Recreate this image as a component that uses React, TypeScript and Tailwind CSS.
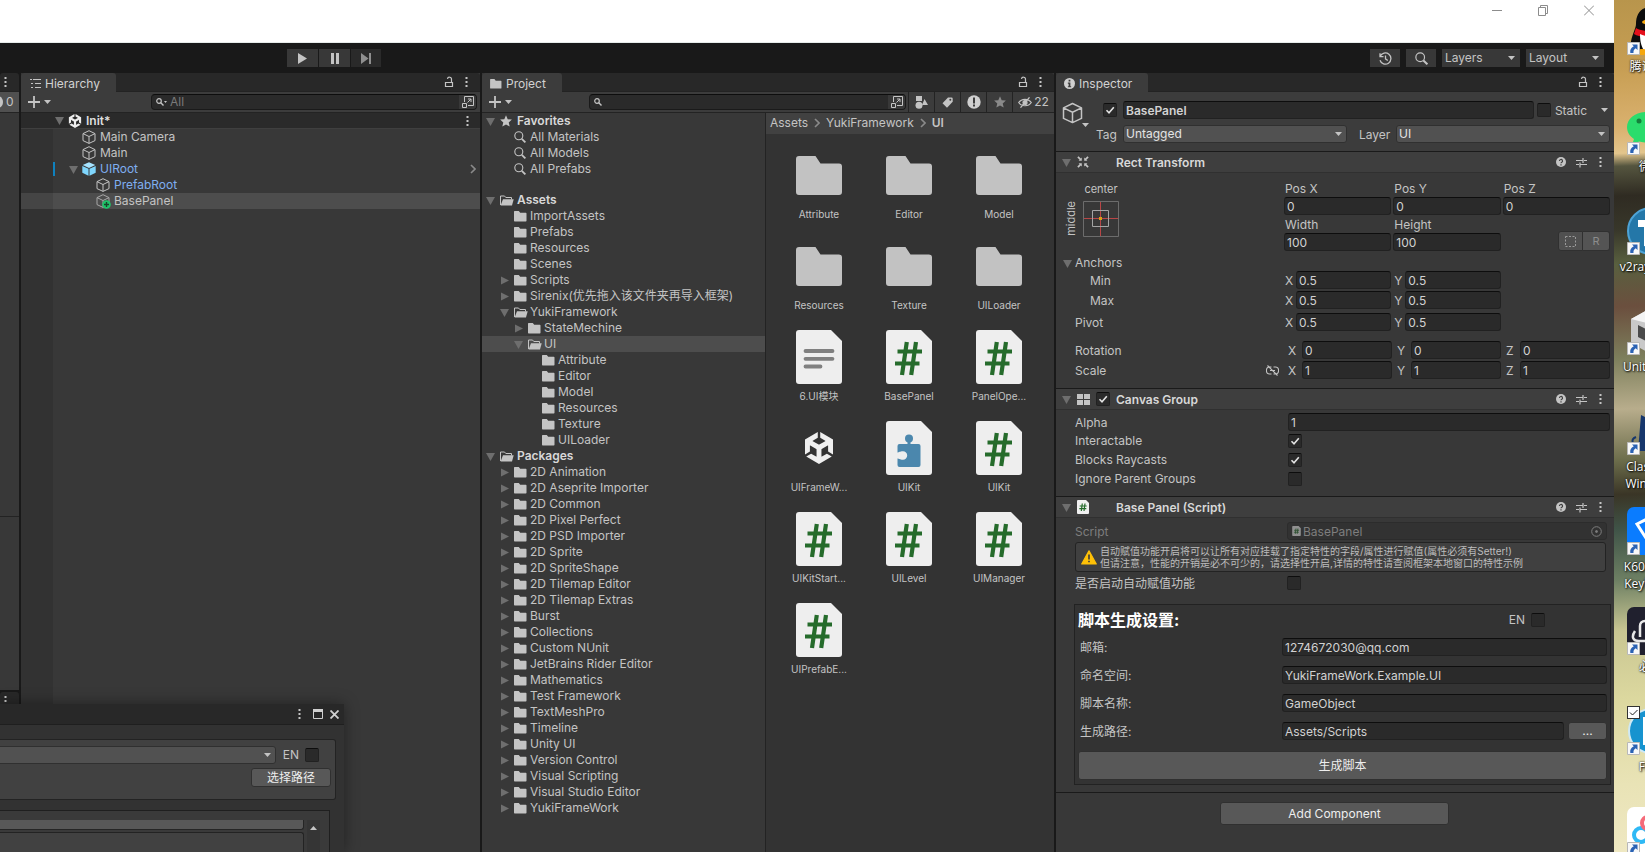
import React, { useId } from "react";
import type { ReactNode } from "react";
import { FaUnity } from "react-icons/fa6";

/* ---------- icons ---------- */

const Dots = () => (
  <svg className="h-3 w-[3px] shrink-0" viewBox="0 0 3 12" fill="#c4c4c4" aria-hidden="true">
    <rect x="0.5" y="1" width="2" height="2" />
    <rect x="0.5" y="5" width="2" height="2" />
    <rect x="0.5" y="9" width="2" height="2" />
  </svg>
);

const Lock = () => (
  <svg className="h-3 w-[10px] shrink-0" viewBox="0 0 10 12" fill="none" stroke="#c4c4c4" aria-hidden="true">
    <path d="M1.5 6.5h7v4h-7zM7.5 6V3.5a2 2 0 0 0-4-.5" strokeWidth="1.2" />
  </svg>
);

const Caret = ({ className = "" }: { className?: string }) => (
  <svg className={`h-1 w-[7px] shrink-0 ${className}`} viewBox="0 0 7 4" fill="#c4c4c4" aria-hidden="true">
    <path d="M0 0h7L3.500 4z" />
  </svg>
);

const Fold = ({ open }: { open: boolean }) => (
  <svg className="size-[9px] shrink-0" viewBox="0 0 9 9" fill="#6e6e6e" aria-hidden="true">
    {open ? <path d="M0 1h9L4.500 9z" /> : <path d="M1 0.500v8l8-4z" />}
  </svg>
);

const Cube = ({ className }: { className: string }) => (
  <svg className={className} viewBox="0 0 14 14" fill="none" stroke="#c4c4c4" strokeLinejoin="round" aria-hidden="true">
    <path d="M7 .7 13 3.600v7L7 13.400 1 10.600v-7zM1 3.600l6 2.900 6-2.900M7 6.500v6.900" />
  </svg>
);

const PrefabCube = () => (
  <svg className="size-[14px] shrink-0" viewBox="0 0 14 14" aria-hidden="true">
    <path d="M7 .3 13.300 3 7 5.900.7 3z" fill="#a6e3ff" />
    <path d="M.3 3.900 6.500 6.700v7L.3 10.800z" fill="#7fd6fd" />
    <path d="M13.700 3.900 7.500 6.700v7l6.200-2.900z" fill="#7fd6fd" />
  </svg>
);

const AddedCube = () => (
  <svg className="h-[15px] w-[15px] shrink-0" viewBox="0 0 15 15" fill="none" aria-hidden="true">
    <path d="M7 .7 13 3.600v7L7 13.400 1 10.600v-7zM1 3.600l6 2.900 6-2.900M7 6.500v6.900" stroke="#a8a8a8" strokeLinejoin="round" />
    <circle cx="10.500" cy="10.500" r="4.300" fill="#1fc46a" />
    <path d="M10.500 8v5M8 10.500h5" stroke="#18452b" strokeWidth="1.400" />
  </svg>
);

const Folder = ({ className = "h-[11px] w-[13px]" }: { className?: string }) => (
  <svg className={`${className} shrink-0`} viewBox="0 0 13 11" fill="#c4c4c4" aria-hidden="true">
    <path d="M.6 0h4.200l1.400 1.800h5.600q.7 0 .7.700v7.300q0 .7-.7.700H.700q-.7 0-.7-.7V.7Q0 0 .6 0z" />
  </svg>
);

const OpenFolder = () => (
  <svg className="h-[11px] w-[14px] shrink-0" viewBox="0 0 14 11" aria-hidden="true">
    <path d="M.5 10V1h4l1.300 1.500H11.500V4.500" fill="none" stroke="#c4c4c4" />
    <path d="M3 4.300h10.700L12 10.500H.6z" fill="#c4c4c4" />
  </svg>
);

const BigFolder = () => (
  <svg className="h-[39px] w-[46px]" viewBox="0 0 46 39" fill="#c2c2c2" aria-hidden="true">
    <path d="M3 0h16.500l5 7.500H43a3 3 0 0 1 3 3V36a3 3 0 0 1-3 3H3a3 3 0 0 1-3-3V3a3 3 0 0 1 3-3z" />
  </svg>
);

const Page = ({ children }: { children: ReactNode }) => (
  <svg className="h-[54px] w-[46px]" viewBox="0 0 46 54" aria-hidden="true">
    <path d="M3 0h32l11 11v40a3 3 0 0 1-3 3H3a3 3 0 0 1-3-3V3a3 3 0 0 1 3-3z" fill="#eeeeee" />
    {children}
  </svg>
);

const ScriptPage = () => (
  <Page>
    <path d="M20.800 12 16 45M30 12l-4.800 33M11.500 21.500h24.500M9 33.500h24.500" stroke="#256b2b" strokeWidth="4.200" fill="none" />
  </Page>
);

const TextPage = () => (
  <Page>
    <path d="M9.500 21h27M9.500 28.800h27M9.500 36.500h15" stroke="#808080" strokeWidth="3.800" strokeLinecap="round" />
  </Page>
);

const PluginPage = () => (
  <Page>
    <circle cx="23" cy="17.500" r="4" fill="#4b87ad" />
    <path d="M21.500 20h3v5h-3zM14 23h18.500a2 2 0 0 1 2 2v19a2 2 0 0 1-2 2H13.500a2 2 0 0 1-2-2v-6.500c1.600 0 2 1.200 5.500 1.200a4.200 4.200 0 0 0 0-8.400c-3.500 0-3.900 1.200-5.500 1.200V25a2 2 0 0 1 2-2z" fill="#4b87ad" />
  </Page>
);

const SmallScript = ({ faded = false }: { faded?: boolean }) => (
  <svg className={faded ? "h-[10px] w-[9px] opacity-50" : "h-[14px] w-3"} viewBox="0 0 12 14" aria-hidden="true">
    <path d="M1 0h8l3 3v10a1 1 0 0 1-1 1H1a1 1 0 0 1-1-1V1a1 1 0 0 1 1-1z" fill="#f0f0f0" />
    <path d="M5.300 3.500 4.300 11M8 3.500 7 11M2.700 6h7M2.300 8.700h7" stroke="#256b2b" strokeWidth="1.200" />
  </svg>
);

const Magnifier = ({ className = "size-3" }: { className?: string }) => (
  <svg className={`${className} shrink-0`} viewBox="0 0 12 12" fill="none" stroke="#c4c4c4" aria-hidden="true">
    <circle cx="4.800" cy="4.800" r="4" strokeWidth="1.100" />
    <path d="m7.800 7.800 3.600 3.600" strokeWidth="1.800" />
  </svg>
);

const SearchGlyph = () => (
  <svg className="size-2 shrink-0" viewBox="0 0 8 8" fill="none" stroke="#c4c4c4" aria-hidden="true">
    <circle cx="3" cy="3" r="2.300" strokeWidth="1.200" />
    <path d="m4.800 4.800 2.700 2.700" strokeWidth="1.400" />
  </svg>
);

const Star = ({ className }: { className: string }) => (
  <svg className={`${className} shrink-0`} viewBox="0 0 12 12" fill="currentColor" aria-hidden="true">
    <path d="m6 .3 1.700 3.900 4.200.4-3.200 2.800 1 4.200L6 9.400l-3.700 2.200 1-4.200L.1 4.600l4.200-.4z" />
  </svg>
);

const Popout = () => (
  <svg className="size-3 shrink-0" viewBox="0 0 12 12" fill="none" stroke="#c4c4c4" aria-hidden="true">
    <path d="M2.500 6V.5h9v9H6M.5 7.500h4v4h-4zM5.500 6.500l3.500-3.500M6 3h3v3" />
  </svg>
);

const Chevron = () => (
  <svg className="h-[10px] w-[6px] shrink-0" viewBox="0 0 6 10" fill="none" stroke="#8a8a8a" strokeWidth="1.600" aria-hidden="true">
    <path d="m1 1 4 4-4 4" />
  </svg>
);

/* ---------- controls ---------- */

function Check({ label, id, checked = false }: { label?: string; id?: string; checked?: boolean }) {
  return (
    <span className="grid size-[14px] shrink-0">
      <input
        type="checkbox"
        id={id}
        aria-label={label}
        defaultChecked={checked}
        className="peer size-[14px] appearance-none rounded-[2px] border border-[#212121] border-t-[#0d0d0d] bg-[#2a2a2a] [grid-area:1/1]"
      />
      <svg className="pointer-events-none hidden size-[14px] peer-checked:block [grid-area:1/1]" viewBox="0 0 14 14" fill="none" stroke="#e4e4e4" strokeWidth="1.600" aria-hidden="true">
        <path d="m3.500 7.300 2.500 2.500 4.800-5.600" />
      </svg>
    </span>
  );
}

const fieldClass =
  "h-[18px] min-w-0 w-full rounded-[3px] border border-[#212121] border-t-[#0d0d0d] bg-[#2a2a2a] px-[2px] text-xs text-[#d2d2d2] outline-none";

const Field = ({ label, id, value }: { label?: string; id?: string; value: string }) => (
  <input type="text" id={id} aria-label={label} defaultValue={value} className={fieldClass} />
);

function Select({ label, id, value, flat = false }: { label?: string; id?: string; value: string; flat?: boolean }) {
  return (
    <span className="grid min-w-0 flex-1 items-center">
      <select
        id={id}
        aria-label={label}
        defaultValue={value}
        className={
          flat
            ? "h-[18px] w-full appearance-none bg-[#383838] px-[3px] text-xs leading-4 text-[#c4c4c4] [grid-area:1/1]"
            : "h-[18px] w-full appearance-none rounded-[3px] border border-[#303030] bg-[#515151] px-[2px] text-xs leading-4 text-[#e4e4e4] [grid-area:1/1]"
        }
      >
        <option>{value}</option>
      </select>
      <Caret className="pointer-events-none mr-[5px] justify-self-end [grid-area:1/1]" />
    </span>
  );
}

const buttonClass = "rounded-[3px] border border-[#303030] bg-[#585858] text-xs leading-4 text-[#eeeeee]";

function PanelTabs({ icon, title, dotsOnly = false }: { icon?: ReactNode; title?: string; dotsOnly?: boolean }) {
  return (
    <div className="flex h-[19px] shrink-0 rounded-t-[3px] border-b border-[#232323] bg-[#282828]">
      {title && (
        <div className="-mb-px flex items-center gap-1 rounded-t-[3px] bg-[#3c3c3c] pt-[2px] pr-4 pl-2 text-[#d2d2d2]">
          {icon}
          <h2>{title}</h2>
        </div>
      )}
      <div className="ml-auto flex items-center gap-[11px] pr-3">
        {!dotsOnly && (
          <button type="button" aria-label="Lock panel">
            <Lock />
          </button>
        )}
        <button type="button" aria-label="Panel menu">
          <Dots />
        </button>
      </div>
    </div>
  );
}

function AddButton() {
  return (
    <button type="button" aria-label="Create" className="flex items-center gap-1 pl-[7px]">
      <svg className="size-3" viewBox="0 0 12 12" stroke="#c4c4c4" strokeWidth="1.800" aria-hidden="true">
        <path d="M6 0v12M0 6h12" />
      </svg>
      <Caret />
    </button>
  );
}

function SearchBox({ placeholder, menu = false }: { placeholder?: string; menu?: boolean }) {
  return (
    <div className="flex h-4 min-w-0 flex-1 items-center overflow-hidden rounded-[4px] border border-[#1a1a1a] border-t-[#0d0d0d] bg-[#2a2a2a] pl-1">
      <SearchGlyph />
      {menu && (
        <svg className="h-[2px] w-[3px]" viewBox="0 0 3 2" fill="#c4c4c4" aria-hidden="true">
          <path d="M0 0h3L1.500 2z" />
        </svg>
      )}
      <input
        type="text"
        aria-label="Search"
        placeholder={placeholder}
        className="min-w-0 flex-1 bg-transparent pl-[3px] text-xs leading-[14px] text-[#d2d2d2] outline-none placeholder:text-[#7a7a7a]"
      />
      <button type="button" aria-label="Open in search window" className="flex h-full w-[17px] items-center justify-center bg-[#383838]">
        <Popout />
      </button>
    </div>
  );
}

/* ---------- top bars ---------- */

function TitleBar() {
  return (
    <header className="flex h-[43px] shrink-0 items-start justify-end border-b border-[#e6ebea] bg-white pr-[2px]">
      {[
        { name: "Minimize", d: "M0 5.500h10" },
        { name: "Restore", d: "M.5 2.500h7v8h-7zM2.500 2.500V.5h7v8h-2" },
        { name: "Close", d: "m0 .5 10 10m0-10-10 10" },
      ].map((b) => (
        <button key={b.name} type="button" aria-label={b.name} className="flex h-5 w-[46px] items-center justify-center">
          <svg className="h-[11px] w-[10px]" viewBox="0 0 10 11" fill="none" stroke="#8c8c8c" aria-hidden="true">
            <path d={b.d} />
          </svg>
        </button>
      ))}
    </header>
  );
}

function Toolbar() {
  return (
    <div className="flex h-[30px] shrink-0 items-center bg-[#191919] pr-[10px] pl-[287px]">
      <div className="flex gap-px">
        <button type="button" aria-label="Play" className="flex h-[18px] w-[31px] items-center justify-center bg-[#383838]">
          <svg className="h-[11px] w-[9px]" viewBox="0 0 9 11" fill="#c4c4c4" aria-hidden="true">
            <path d="M0 0v11l9-5.500z" />
          </svg>
        </button>
        <button type="button" aria-label="Pause" className="flex h-[18px] w-[31px] items-center justify-center bg-[#383838]">
          <svg className="h-[11px] w-2" viewBox="0 0 8 11" fill="#c4c4c4" aria-hidden="true">
            <path d="M0 0h3v11H0zM5 0h3v11H5z" />
          </svg>
        </button>
        <button type="button" aria-label="Step" className="flex h-[18px] w-[30px] items-center justify-center bg-[#2a2a2a]">
          <svg className="h-[11px] w-[10px]" viewBox="0 0 10 11" fill="#8f8f8f" aria-hidden="true">
            <path d="M0 0v11l7.500-5.500zM8 0h2v11H8z" />
          </svg>
        </button>
      </div>
      <div className="ml-auto flex gap-[6px]">
        <button type="button" aria-label="Undo history" className="flex h-[18px] w-[30px] items-center justify-center bg-[#383838]">
          <svg className="size-[13px]" viewBox="0 0 13 13" fill="none" stroke="#c4c4c4" strokeWidth="1.300" aria-hidden="true">
            <path d="M1.200 4.300a5.600 5.600 0 1 1-.2 4M1 1.200v3.500h3.500M6.500 3.500v3.300l2.300 1.700" />
          </svg>
        </button>
        <button type="button" aria-label="Search" className="flex h-[18px] w-[30px] items-center justify-center bg-[#383838]">
          <Magnifier className="size-[13px]" />
        </button>
        <div className="flex w-[78px]">
          <Select flat label="Layers menu" value="Layers" />
        </div>
        <div className="flex w-[78px]">
          <Select flat label="Layout menu" value="Layout" />
        </div>
      </div>
    </div>
  );
}

/* ---------- hierarchy ---------- */

function SceneSliver() {
  return (
    <aside className="flex w-[19px] shrink-0 flex-col gap-[2px] overflow-hidden">
      <div className="flex min-h-0 flex-1 flex-col">
        <PanelTabs dotsOnly />
        <div className="flex h-[21px] shrink-0 items-center gap-[3px] border-b border-[#232323] bg-[#505050]">
          <svg className="h-3 w-[3px]" viewBox="0 0 3 12" fill="#c4c4c4" aria-hidden="true">
            <path d="M0 .5q3 2 3 5.500t-3 5.500z" />
          </svg>
          <span>0</span>
        </div>
        <div className="flex-1 border-b border-[#232323] bg-[#383838]" />
        <div className="h-[173px] bg-[#383838]" />
      </div>
      <div className="h-[160px] shrink-0">
        <PanelTabs dotsOnly />
        <div className="h-full bg-[#383838]" />
      </div>
    </aside>
  );
}

function HierarchyRow({ name, className = "", indent, icon, arrow = false, children }: { name: string; className?: string; indent: string; icon: ReactNode; arrow?: boolean; children?: ReactNode }) {
  return (
    <li className={`flex h-4 items-center border-l-[32px] border-black/10 ${className}`}>
      <div className={`flex h-[14px] flex-1 items-center gap-1 pr-1 ${indent}`}>
        <span className="w-[9px]">{arrow && <Fold open />}</span>
        <span className="w-[14px]">{icon}</span>
        <span className="flex-1">{name}</span>
        {children}
      </div>
    </li>
  );
}

function Hierarchy() {
  return (
    <section className="flex w-[459px] shrink-0 flex-col bg-[#383838]">
      <PanelTabs
        title="Hierarchy"
        icon={
          <svg className="h-[9px] w-3" viewBox="0 0 12 9" stroke="#c4c4c4" aria-hidden="true">
            <path d="M1 .5h2M4 .5h8M2 4.500h2M6 4.500h6M2 8.500h2M6 8.500h6" />
          </svg>
        }
      />
      <div className="flex h-[21px] shrink-0 items-center border-b border-[#232323] bg-[#3c3c3c] pr-[3px]">
        <div className="w-[130px]">
          <AddButton />
        </div>
        <SearchBox placeholder="All" menu />
      </div>
      <div className="flex h-4 shrink-0 items-center gap-1 border-b border-[#3f3f3f] bg-[#2a2a2a] pr-[11px] pl-[34px] font-semibold text-[#dedede]">
        <Fold open />
        <FaUnity className="size-[14px] text-[#eeeeee]" aria-hidden="true" />
        <span className="flex-1">Init*</span>
        <button type="button" aria-label="Scene menu">
          <Dots />
        </button>
      </div>
      <ul>
        <HierarchyRow name="Main Camera" indent="pl-4" icon={<Cube className="size-[14px]" />} />
        <HierarchyRow name="Main" indent="pl-4" icon={<Cube className="size-[14px]" />} />
        <HierarchyRow name="UIRoot" className="text-[#7faef0]" indent="border-l-2 border-[#0f81be] pl-[14px]" icon={<PrefabCube />} arrow>
          <Chevron />
        </HierarchyRow>
        <HierarchyRow name="PrefabRoot" className="text-[#7faef0]" indent="pl-[30px]" icon={<Cube className="size-[14px]" />} />
        <HierarchyRow name="BasePanel" className="bg-[#4d4d4d]" indent="pl-[30px]" icon={<AddedCube />} />
      </ul>
      <div className="w-8 flex-1 bg-black/10" />
    </section>
  );
}

/* ---------- project ---------- */

type Node = { name: string; level: 0 | 1 | 2 | 3; fold?: "open" | "closed"; kind?: "star" | "search"; selected?: boolean };

const levelPad = ["pl-1", "pl-[18px]", "pl-8", "pl-[46px]"];

const favorites: Node[] = [
  { name: "Favorites", level: 0, fold: "open", kind: "star" },
  { name: "All Materials", level: 1, kind: "search" },
  { name: "All Models", level: 1, kind: "search" },
  { name: "All Prefabs", level: 1, kind: "search" },
];

const closed = (name: string): Node => ({ name, level: 1, fold: "closed" });

const assets: Node[] = [
  { name: "Assets", level: 0, fold: "open" },
  { name: "ImportAssets", level: 1 },
  { name: "Prefabs", level: 1 },
  { name: "Resources", level: 1 },
  { name: "Scenes", level: 1 },
  closed("Scripts"),
  closed("Sirenix(优先拖入该文件夹再导入框架)"),
  { name: "YukiFramework", level: 1, fold: "open" },
  { name: "StateMechine", level: 2, fold: "closed" },
  { name: "UI", level: 2, fold: "open", selected: true },
  { name: "Attribute", level: 3 },
  { name: "Editor", level: 3 },
  { name: "Model", level: 3 },
  { name: "Resources", level: 3 },
  { name: "Texture", level: 3 },
  { name: "UILoader", level: 3 },
  { name: "Packages", level: 0, fold: "open" },
  closed("2D Animation"),
  closed("2D Aseprite Importer"),
  closed("2D Common"),
  closed("2D Pixel Perfect"),
  closed("2D PSD Importer"),
  closed("2D Sprite"),
  closed("2D SpriteShape"),
  closed("2D Tilemap Editor"),
  closed("2D Tilemap Extras"),
  closed("Burst"),
  closed("Collections"),
  closed("Custom NUnit"),
  closed("JetBrains Rider Editor"),
  closed("Mathematics"),
  closed("Test Framework"),
  closed("TextMeshPro"),
  closed("Timeline"),
  closed("Unity UI"),
  closed("Version Control"),
  closed("Visual Scripting"),
  closed("Visual Studio Editor"),
  closed("YukiFrameWork"),
];

function TreeRow({ node }: { node: Node }) {
  let icon = <Folder />;
  if (node.kind === "star") icon = <Star className="size-3 text-[#c4c4c4]" />;
  else if (node.kind === "search") icon = <Magnifier />;
  else if (node.fold === "open") icon = <OpenFolder />;
  return (
    <li
      className={`flex h-4 items-center whitespace-nowrap ${levelPad[node.level]} ${node.selected ? "bg-[#4d4d4d]" : ""} ${
        node.level === 0 ? "font-semibold text-[#d8d8d8]" : ""
      }`}
    >
      <span className="w-[14px]">{node.fold && <Fold open={node.fold === "open"} />}</span>
      <span className={node.level === 0 ? "w-[17px]" : "w-4"}>{icon}</span>
      <span>{node.name}</span>
    </li>
  );
}

const gridItems: { name: string; icon: ReactNode }[] = [
  { name: "Attribute", icon: <BigFolder /> },
  { name: "Editor", icon: <BigFolder /> },
  { name: "Model", icon: <BigFolder /> },
  { name: "Resources", icon: <BigFolder /> },
  { name: "Texture", icon: <BigFolder /> },
  { name: "UILoader", icon: <BigFolder /> },
  { name: "6.UI模块", icon: <TextPage /> },
  { name: "BasePanel", icon: <ScriptPage /> },
  { name: "PanelOpe...", icon: <ScriptPage /> },
  { name: "UIFrameW...", icon: <FaUnity className="size-8 text-[#efefef]" aria-hidden="true" /> },
  { name: "UIKit", icon: <PluginPage /> },
  { name: "UIKit", icon: <ScriptPage /> },
  { name: "UIKitStart...", icon: <ScriptPage /> },
  { name: "UILevel", icon: <ScriptPage /> },
  { name: "UIManager", icon: <ScriptPage /> },
  { name: "UIPrefabE...", icon: <ScriptPage /> },
];

const filterButton = "flex h-5 w-[26px] items-center justify-center border-l border-[#232323]";

function Project() {
  return (
    <section className="flex min-w-0 flex-1 flex-col bg-[#383838]">
      <PanelTabs title="Project" icon={<Folder className="h-[10px] w-3" />} />
      <div className="flex h-[21px] shrink-0 items-center border-b border-[#232323] bg-[#3c3c3c]">
        <div className="w-[107px]">
          <AddButton />
        </div>
        <SearchBox />
        <div className="ml-[2px] flex">
          <button type="button" aria-label="Filter by type" className={filterButton}>
            <svg className="h-[13px] w-[13px]" viewBox="0 0 13 13" fill="#c4c4c4" aria-hidden="true">
              <path d="M1 0h6v5H1zM9.500 3l3.500 6H7z" />
              <circle cx="4" cy="9.300" r="3.500" />
            </svg>
          </button>
          <button type="button" aria-label="Filter by label" className={filterButton}>
            <svg className="h-[11px] w-[11px]" viewBox="0 0 11 11" aria-hidden="true">
              <path d="M6 .5h3.500a1.200 1.200 0 0 1 1.200 1.200v3L5 10.700.5 6.200z" fill="#c4c4c4" />
              <circle cx="8.300" cy="2.800" r="1" fill="#3c3c3c" />
            </svg>
          </button>
          <button type="button" aria-label="Import activity" className={filterButton}>
            <svg className="size-[14px]" viewBox="0 0 14 14" aria-hidden="true">
              <circle cx="7" cy="7" r="6.700" fill="#d0d0d0" />
              <path d="M6 2.500h2v6H6zM6 9.500h2v2H6z" fill="#3c3c3c" />
            </svg>
          </button>
          <button type="button" aria-label="Favorites" className={filterButton}>
            <Star className="size-3 text-[#8a8a8a]" />
          </button>
          <button type="button" aria-label="Hidden packages" className="flex h-5 w-[42px] items-center justify-center gap-[2px] border-l border-[#232323]">
            <svg className="h-[11px] w-[14px]" viewBox="0 0 14 11" fill="none" stroke="#c4c4c4" strokeWidth="1.200" aria-hidden="true">
              <path d="M.7 5.500C3.500 1.200 10.500 1.200 13.300 5.500 10.500 9.800 3.500 9.800.7 5.500zM11.500.3l-9 10.400" />
              <circle cx="7" cy="5.500" r="2" fill="#c4c4c4" />
            </svg>
            <span>22</span>
          </button>
        </div>
      </div>
      <div className="flex min-h-0 flex-1">
        <nav aria-label="Folders" className="w-[284px] shrink-0 overflow-hidden border-r border-[#232323]">
          <ul className="mb-[15px]">
            {favorites.map((n) => (
              <TreeRow key={n.name} node={n} />
            ))}
          </ul>
          <ul>
            {assets.map((n, i) => (
              <TreeRow key={i} node={n} />
            ))}
          </ul>
        </nav>
        <div className="min-w-0 flex-1 bg-[#333333]">
          <nav aria-label="Breadcrumb" className="flex h-[21px] items-center gap-[6px] bg-[#414141] pb-[2px] pl-1">
            <a href="#assets">Assets</a>
            <Chevron />
            <a href="#yukiframework">YukiFramework</a>
            <Chevron />
            <a href="#ui" className="font-semibold">
              UI
            </a>
          </nav>
          <ul className="grid grid-cols-3 pt-2 pr-[10px] pl-2">
            {gridItems.map((item, i) => (
              <li key={i} className="flex h-[91px] flex-col items-center text-[10px] leading-3">
                <span className="flex h-[66px] items-center">{item.icon}</span>
                <span className="whitespace-nowrap">{item.name}</span>
              </li>
            ))}
          </ul>
        </div>
      </div>
    </section>
  );
}

/* ---------- inspector ---------- */

function ComponentHeader({ title, icon, enabled }: { title: string; icon: ReactNode; enabled?: boolean }) {
  return (
    <div className="flex h-[22px] items-center border-t border-b border-t-[#1a1a1a] border-b-[#303030] bg-[#3e3e3e] pr-3 pl-[6px]">
      <Fold open />
      <span className="ml-[5px] flex w-[14px] justify-center">{icon}</span>
      <span className="ml-[6px] flex w-5">{enabled && <Check label={`${title} enabled`} checked />}</span>
      <h3 className="flex-1 pt-[2px] font-semibold text-[#d8d8d8]">{title}</h3>
      <div className="flex items-center gap-[10px]">
        <button type="button" aria-label="Help">
          <svg className="size-[10px]" viewBox="0 0 10 10" aria-hidden="true">
            <circle cx="5" cy="5" r="5" fill="#c4c4c4" />
            <path d="M3.500 4a1.500 1.500 0 1 1 2.300 1.200q-.8.400-.8 1M5 7.200v1.300" stroke="#3e3e3e" strokeWidth="1.200" fill="none" />
          </svg>
        </button>
        <button type="button" aria-label="Presets" className="mr-[2px]">
          <svg className="size-[11px]" viewBox="0 0 11 11" stroke="#c4c4c4" strokeWidth="1.200" aria-hidden="true">
            <path d="M0 3.500h7M7 1v5M8 3.500h3M0 7.500h3M4 5.500v5M4 7.500h7" />
          </svg>
        </button>
        <button type="button" aria-label={`${title} menu`}>
          <Dots />
        </button>
      </div>
    </div>
  );
}

function LabeledCell({ label, value }: { label: string; value: string }) {
  const id = useId();
  return (
    <div className="flex min-w-0 flex-col">
      <label htmlFor={id} className="h-4 pl-px">
        {label}
      </label>
      <Field id={id} value={value} />
    </div>
  );
}

function AxisCell({ axis, value, name, wide = false }: { axis: string; value: string; name: string; wide?: boolean }) {
  const id = useId();
  return (
    <div className="flex min-w-0 items-center">
      <label htmlFor={id} aria-label={`${name} ${axis}`} className={wide ? "w-[14px] shrink-0 pt-px" : "w-3 shrink-0 pt-px pl-px"}>
        {axis}
      </label>
      <Field id={id} value={value} />
    </div>
  );
}

function AnchorRow({ name, indent = false }: { name: string; indent?: boolean }) {
  return (
    <div className="flex h-[18px] items-center">
      <span className={indent ? "w-[209px] shrink-0 pt-px pl-[15px]" : "w-[209px] shrink-0 pt-px"}>{name}</span>
      <div className="grid flex-1 grid-cols-3 gap-[2px]">
        <AxisCell name={name} axis="X" value="0.5" />
        <AxisCell name={name} axis="Y" value="0.5" />
      </div>
    </div>
  );
}

function VectorRow({ name, value, linked = false }: { name: string; value: string; linked?: boolean }) {
  return (
    <div className="flex h-[18px] items-center">
      <span className="flex w-[213px] shrink-0 items-center justify-between pt-px pr-[9px]">
        {name}
        {linked && (
          <button type="button" aria-label="Constrain proportions">
            <svg className="h-[11px] w-[13px]" viewBox="0 0 13 11" fill="none" stroke="#c4c4c4" strokeWidth="1.100" aria-hidden="true">
              <path d="M5.500 2h-2a2.900 3.300 0 0 0 0 7h2M7.500 2h2a2.900 3.300 0 0 1 0 7h-2M4 5.500h5M1.500.5l10 10" />
            </svg>
          </button>
        )}
      </span>
      <div className="grid flex-1 grid-cols-3 gap-[5px]">
        <AxisCell wide name={name} axis="X" value={value} />
        <AxisCell wide name={name} axis="Y" value={value} />
        <AxisCell wide name={name} axis="Z" value={value} />
      </div>
    </div>
  );
}

function RectTransform() {
  return (
    <div className="pt-2 pr-1 pb-[9px] pl-[19px]">
      <div className="flex">
        <div className="flex w-[209px] shrink-0">
          <span className="-ml-3 flex h-[62px] w-5 items-end pb-[7px] text-[11px] leading-4 whitespace-nowrap">
            <span className="rotate-180 [writing-mode:vertical-rl]">middle</span>
          </span>
          <div className="flex flex-col items-center text-[11px]">
            <span className="h-5 leading-4">center</span>
            <button type="button" aria-label="Anchor presets">
              <svg className="size-9" viewBox="0 0 36 36" fill="none" aria-hidden="true">
                <path d="M.5.500h35v35H.500z" stroke="#6c6c6c" />
                <path d="M17.500 1v34M1 17.500h34" stroke="#b84646" />
                <path d="M9.500 9.500h16v16h-16z" stroke="#a4a4a4" />
                <path d="M16 16h3v3h-3z" fill="#d8a018" />
              </svg>
            </button>
          </div>
        </div>
        <div className="grid flex-1 grid-cols-3 gap-[2px]">
          <LabeledCell label="Pos X" value="0" />
          <LabeledCell label="Pos Y" value="0" />
          <LabeledCell label="Pos Z" value="0" />
          <LabeledCell label="Width" value="100" />
          <LabeledCell label="Height" value="100" />
          <div className="flex items-end justify-end">
            <button type="button" aria-label="Blueprint mode" className="flex h-5 w-[25px] items-center justify-center rounded-l-[3px] border border-[#303030] bg-[#505050]">
              <svg className="size-[11px]" viewBox="0 0 11 11" fill="none" stroke="#9a9a9a" strokeDasharray="2 1.500" aria-hidden="true">
                <path d="M.5.500h10v10H.500z" />
              </svg>
            </button>
            <button type="button" aria-label="Raw edit mode" className="h-5 w-[27px] rounded-r-[3px] border border-l-0 border-[#303030] bg-[#545454] text-[11px] leading-4 text-[#8c8c8c]">
              R
            </button>
          </div>
        </div>
      </div>
      <button type="button" className="mt-1 -ml-3 flex h-4 items-center gap-[3px]">
        <Fold open />
        <span>Anchors</span>
      </button>
      <div className="flex flex-col gap-[2px]">
        <AnchorRow indent name="Min" />
        <AnchorRow indent name="Max" />
      </div>
      <div className="pt-1 pb-[10px]">
        <AnchorRow name="Pivot" />
      </div>
      <div className="flex flex-col gap-[2px]">
        <VectorRow name="Rotation" value="0" />
        <VectorRow name="Scale" value="1" linked />
      </div>
    </div>
  );
}

function ToggleRow({ label, checked = false }: { label: string; checked?: boolean }) {
  const id = useId();
  return (
    <div className="flex h-[19px] items-center">
      <label htmlFor={id} className="w-[213px]">
        {label}
      </label>
      <Check id={id} checked={checked} />
    </div>
  );
}

function CanvasGroup() {
  return (
    <div className="pt-[3px] pr-1 pb-2 pl-[19px]">
      <div className="flex items-center">
        <label htmlFor="alpha" className="w-[213px] shrink-0 pt-px">
          Alpha
        </label>
        <Field id="alpha" value="1" />
      </div>
      <ToggleRow label="Interactable" checked />
      <ToggleRow label="Blocks Raycasts" checked />
      <ToggleRow label="Ignore Parent Groups" />
    </div>
  );
}

function ScriptRow({ label, value, children }: { label: string; value: string; children?: ReactNode }) {
  const id = useId();
  return (
    <div className="flex h-[18px] items-center">
      <label htmlFor={id} className="w-[204px] shrink-0 pt-px pl-[2px]">
        {label}
      </label>
      <Field id={id} value={value} />
      {children}
    </div>
  );
}

function BasePanelScript() {
  return (
    <div className="pt-1 pr-[3px] pb-[7px] pl-[18px]">
      <div className="flex h-[18px] items-center pr-1 pl-px text-[#7e7e7e]">
        <span className="w-[212px] shrink-0 pt-[2px]">Script</span>
        <div className="flex h-[18px] flex-1 items-center gap-[2px] rounded-[3px] border border-[#2c2c2c] bg-[#323232] pr-1 pl-1">
          <SmallScript faded />
          <span className="flex-1 pt-px">BasePanel</span>
          <button type="button" aria-label="Select script">
            <svg className="size-[11px]" viewBox="0 0 11 11" fill="none" stroke="#7e7e7e" aria-hidden="true">
              <circle cx="5.500" cy="5.500" r="4.800" />
              <circle cx="5.500" cy="5.500" r="1" fill="#7e7e7e" />
            </svg>
          </button>
        </div>
      </div>
      <div className="mt-[2px] mr-[5px] ml-px flex h-[30px] items-center gap-[3px] rounded-[3px] border border-[#232323] bg-[#404040] pl-[5px] text-[10px] leading-3 text-[#bdbdbd]">
        <svg className="h-[15px] w-4 shrink-0" viewBox="0 0 16 15" aria-hidden="true">
          <path d="M8 .8 15.300 14H.7z" fill="#ffc107" stroke="#ffc107" strokeWidth="1.200" strokeLinejoin="round" />
          <path d="M7.200 4.500h1.600v5H7.200zM7.200 10.700h1.600v1.600H7.200z" fill="#3a3a3a" />
        </svg>
        <p className="whitespace-nowrap">
          自动赋值功能开启将可以让所有对应挂载了指定特性的字段/属性进行赋值(属性必须有Setter!)
          <br />
          但请注意，性能的开销是必不可少的，请选择性开启,详情的特性请查阅框架本地窗口的特性示例
        </p>
      </div>
      <div className="mt-[2px] flex h-[18px] items-center pl-px">
        <label htmlFor="auto-assign" className="w-[212px] pt-[2px]">
          是否启动自动赋值功能
        </label>
        <Check id="auto-assign" />
      </div>
      <div className="mt-3 flex flex-col border border-[#222222] bg-[#333333] px-[3px] pb-1">
        <div className="mb-[3px] flex h-[30px] items-center pr-[62px]">
          <h4 className="flex-1 text-base font-bold text-white">脚本生成设置:</h4>
          <label htmlFor="script-en" className="mr-[6px]">
            EN
          </label>
          <Check id="script-en" />
        </div>
        <div className="flex flex-col gap-[10px]">
          <ScriptRow label="邮箱:" value="1274672030@qq.com" />
          <ScriptRow label="命名空间:" value="YukiFrameWork.Example.UI" />
          <ScriptRow label="脚本名称:" value="GameObject" />
          <ScriptRow label="生成路径:" value="Assets/Scripts">
            <button type="button" aria-label="Browse path" className={`${buttonClass} ml-1 h-[18px] w-[39px] shrink-0`}>
              ...
            </button>
          </ScriptRow>
        </div>
        <button type="button" className={`${buttonClass} mt-[11px] h-[29px]`}>
          生成脚本
        </button>
      </div>
    </div>
  );
}

function Inspector() {
  return (
    <section className="flex w-[558px] shrink-0 flex-col bg-[#383838]">
      <PanelTabs
        title="Inspector"
        icon={
          <svg className="size-[11px]" viewBox="0 0 10 10" aria-hidden="true">
            <circle cx="5" cy="5" r="5" fill="#d0d0d0" />
            <path d="M4.200 1.700h1.600v1.500H4.200zM3.500 4.200h2.300V7.500h.7v1h-3v-1h.7V5.200h-.7z" fill="#3c3c3c" />
          </svg>
        }
      />
      <div className="flex h-[59px] shrink-0 bg-[#3c3c3c] pr-1 pl-[6px]">
        <button type="button" aria-label="Object icon" className="flex w-[27px] items-start pt-[10px]">
          <Cube className="size-[22px]" />
          <Caret className="mt-[21px] -ml-px" />
        </button>
        <div className="flex flex-1 flex-col gap-[6px] pt-[9px]">
          <div className="flex h-[18px] items-center pl-[14px]">
            <Check label="Active" checked />
            <div className="ml-[6px] flex flex-1">
              <input type="text" aria-label="Object name" defaultValue="BasePanel" className={`${fieldClass} font-semibold`} />
            </div>
            <span className="ml-[3px] flex items-center gap-1">
              <Check id="static" />
              <label htmlFor="static" className="pt-[2px]">
                Static
              </label>
            </span>
            <button type="button" aria-label="Static options" className="mr-[2px] ml-[14px]">
              <Caret />
            </button>
          </div>
          <div className="flex h-[18px] items-center">
            <label htmlFor="tag" className="w-[34px] pt-px pl-[7px]">
              Tag
            </label>
            <div className="flex w-[224px]">
              <Select id="tag" value="Untagged" />
            </div>
            <label htmlFor="layer" className="w-[49px] pt-px pl-3">
              Layer
            </label>
            <Select id="layer" value="UI" />
          </div>
        </div>
      </div>
      <ComponentHeader
        title="Rect Transform"
        icon={
          <svg className="size-3" viewBox="0 0 12 12" fill="#c4c4c4" aria-hidden="true">
            <path d="M4.800 4.800H1.600l1-1L.3 1.500 1.500.3l2.300 2.300 1-1zM7.200 4.800V1.600l1 1L10.500.3l1.200 1.200-2.300 2.300 1 1zM4.800 7.200v3.200l-1-1-2.300 2.300L.3 10.500l2.300-2.300-1-1zM7.200 7.200h3.200l-1 1 2.300 2.300-1.200 1.200-2.300-2.300-1 1z" />
          </svg>
        }
      />
      <RectTransform />
      <ComponentHeader
        title="Canvas Group"
        enabled
        icon={
          <svg className="h-[11px] w-[13px]" viewBox="0 0 13 11" fill="#c4c4c4" aria-hidden="true">
            <path d="M0 0h6v5H0zM7 0h6v5H7zM0 6h6v5H0zM7 6h6v5H7z" />
          </svg>
        }
      />
      <CanvasGroup />
      <ComponentHeader title="Base Panel (Script)" icon={<SmallScript />} />
      <BasePanelScript />
      <div className="flex justify-center border-t border-[#1a1a1a] pt-[9px] pr-px">
        <button type="button" className={`${buttonClass} h-[23px] w-[229px]`}>
          Add Component
        </button>
      </div>
    </section>
  );
}

/* ---------- floating window ---------- */

function FloatingWindow() {
  return (
    <section className="absolute bottom-0 left-0 flex h-[148px] w-[344px] flex-col overflow-hidden bg-[#323232] shadow-[0_0_14px_rgba(0,0,0,0.4)]">
      <div className="flex h-[21px] shrink-0 items-center justify-end gap-[10px] border-b border-[#1f1f1f] bg-[#282828] pr-[5px]">
        <button type="button" aria-label="Window menu">
          <Dots />
        </button>
        <button type="button" aria-label="Maximize" className="ml-[2px]">
          <svg className="size-[10px]" viewBox="0 0 10 10" fill="none" stroke="#d0d0d0" aria-hidden="true">
            <path d="M.5 1h9v8.500h-9z" />
            <path d="M0 1.500h10" strokeWidth="3" />
          </svg>
        </button>
        <button type="button" aria-label="Close window" className="-ml-[3px]">
          <svg className="size-[9px]" viewBox="0 0 9 9" stroke="#d0d0d0" strokeWidth="1.800" aria-hidden="true">
            <path d="m.5.500 8 8m0-8-8 8" />
          </svg>
        </button>
      </div>
      <div className="mt-[14px] mr-2 flex h-[61px] shrink-0 flex-col gap-1 rounded-r-[3px] border border-l-0 border-[#232323] bg-[#414141] pt-[6px] pr-1">
        <div className="-ml-1 flex h-[18px] items-center pr-3">
          <Select label="Framework module" value="" />
          <label htmlFor="window-en" className="mr-[6px] ml-[7px]">
            EN
          </label>
          <Check id="window-en" />
        </div>
        <button type="button" className={`${buttonClass} h-[19px] w-20 self-end`}>
          选择路径
        </button>
      </div>
      <div className="mt-[10px] mr-[14px] flex flex-1 gap-[3px] border-t border-r border-[#1f1f1f] bg-[#3a3a3a] pt-[9px] pr-[9px]">
        <div className="flex flex-1 flex-col gap-[2px]">
          <div className="h-[10px] rounded-br-[3px] border-r border-b border-[#252525] bg-[#585858]" />
          <div className="flex-1 rounded-tr-[3px] border-t border-r border-[#232323] bg-[#414141]" />
        </div>
        <button type="button" aria-label="Scroll up" className="flex w-[13px] items-start justify-center bg-[#353535] pt-[6px]">
          <Caret className="rotate-180" />
        </button>
      </div>
    </section>
  );
}

/* ---------- desktop ---------- */

const Penguin = () => (
  <svg className="size-12" viewBox="0 0 48 48" aria-hidden="true">
    <path d="M24 0C13 0 9 8 9 17c0 5-6 14-5 22 1 3 3 2 5-1 2 6 8 10 15 10s13-4 15-10z" fill="#0c0c0c" />
    <path d="M9 21c6 4 24 4 30 0l1 6c-8 5-24 5-33 0z" fill="#e5101b" />
    <path d="M13 27c0 12 4 20 11 20s11-8 11-20c-6 3-16 3-22 0z" fill="#fff" />
    <ellipse cx="15" cy="45" rx="9" ry="3" fill="#f6a70c" />
    <ellipse cx="24" cy="15" rx="9" ry="3" fill="#f6a70c" />
  </svg>
);

const Chat = () => (
  <svg className="size-12" viewBox="0 0 48 48" aria-hidden="true">
    <path d="M19 5C8 5 0 12 0 20c0 5 2.500 9 7 12l-2 6 7-3.500c2 .6 4 .9 7 .9 11 0 19-7 19-15.400S30 5 19 5z" fill="#2bdc6c" />
    <circle cx="12" cy="14" r="2.500" fill="#14803c" />
  </svg>
);

const desktopItems: { lines: string[]; icon: ReactNode; checked?: boolean }[] = [
  { lines: ["腾讯QQ"], icon: <Penguin /> },
  { lines: ["微信"], icon: <Chat /> },
  {
    lines: ["v2rayN.exe"],
    icon: (
      <svg className="size-12" viewBox="0 0 48 48" aria-hidden="true">
        <circle cx="24" cy="24" r="23" fill="#2477a8" stroke="#4da3d6" strokeWidth="2" />
        <path d="M11 13h26v6l-13 22-7-2V20h-6z" fill="#fff" />
      </svg>
    ),
  },
  {
    lines: ["Unity Hub"],
    icon: (
      <svg className="size-12" viewBox="0 0 48 48" aria-hidden="true">
        <path d="M24 1 44 12v24L24 47 4 36V12z" fill="#c9c9c9" />
        <path d="M4 12 24 1l20 11-20 5z" fill="#f4f4f4" />
        <path d="m11 18 10 5v12L11 30zM37 18l-10 5v12l10-5z" fill="#4a4a4a" />
      </svg>
    ),
  },
  {
    lines: ["Clash for", "Windows"],
    icon: (
      <svg className="size-12" viewBox="0 0 48 48" aria-hidden="true">
        <path d="M14 8 22 12h12l8-6v38H11z" fill="#17376c" />
        <path d="M6 36q-2-4 3-6" fill="none" stroke="#17376c" strokeWidth="2" />
      </svg>
    ),
  },
  {
    lines: ["K600 Plus", "Keyboard"],
    icon: (
      <svg className="size-12" viewBox="0 0 48 48" aria-hidden="true">
        <rect width="48" height="48" rx="7" fill="#0a7cff" />
        <path d="m10 17 14-7 14 7-14 22z" fill="none" stroke="#fff" strokeWidth="3" />
      </svg>
    ),
  },
  {
    lines: ["必剪"],
    icon: (
      <svg className="size-12" viewBox="0 0 48 48" aria-hidden="true">
        <rect width="48" height="48" rx="7" fill="#20202e" />
        <path d="M8 24c-4 6-2 10 4 10h24M13 30V19c0-3 2-5 5-5h18" fill="none" stroke="#e8e8e8" strokeWidth="2.500" />
      </svg>
    ),
  },
  {
    lines: ["Files"],
    checked: true,
    icon: (
      <svg className="size-12" viewBox="0 0 48 48" aria-hidden="true">
        <circle cx="24" cy="24" r="22" fill="#1793cf" stroke="#cfe9f5" strokeWidth="2" />
        <path d="M16 10h8v28h-8z" fill="#fff" />
      </svg>
    ),
  },
  {
    lines: [],
    icon: (
      <svg className="size-12" viewBox="0 0 48 48" aria-hidden="true">
        <rect width="48" height="48" rx="7" fill="#fff" />
        <circle cx="14" cy="28" r="7" fill="none" stroke="#2fb9f5" strokeWidth="4" />
        <circle cx="21" cy="16" r="6" fill="none" stroke="#f56b7a" strokeWidth="4" />
      </svg>
    ),
  },
];

function Desktop() {
  return (
    <aside
      aria-label="Desktop"
      className="w-[31px] shrink-0 overflow-hidden bg-[linear-gradient(178deg,#b8954c_0%,#c79e53_8%,#dab16f_15%,#e3c58c_18%,#55553f_19.500%,#2f2b22_23%,#38372a_27%,#59603f_31%,#6b4f3e_36%,#7d7f5c_42%,#b8ad8c_48%,#6c6d4b_54%,#3a3526_58%,#3f5347_62%,#6d7f63_68%,#c9c692_74%,#dcd89f_82%,#e9e3b6_92%,#efe8c2_100%)]"
    >
      <ul className="w-[74px]">
        {desktopItems.map((item, i) => (
          <li key={i} className="flex h-[100px] flex-col items-center pt-[7px]">
            <div className="relative size-12">
              {item.icon}
              {item.checked && (
                <input type="checkbox" defaultChecked aria-label="Select item" className="absolute -top-px left-0 size-[13px] appearance-none border border-[#333333] bg-white" />
              )}
              {item.checked && (
                <svg className="pointer-events-none absolute -top-px left-0 size-[13px]" viewBox="0 0 13 13" fill="none" stroke="#222222" aria-hidden="true">
                  <path d="m3 6.500 2.500 2.500L10.500 4" />
                </svg>
              )}
              <svg className="absolute bottom-0 left-0 size-[13px]" viewBox="0 0 13 13" aria-hidden="true">
                <path d="M.5.500h12v12H.500z" fill="#f8f8f8" stroke="#b8b8b8" />
                <path d="M5 2.500h5.500V8L8.700 6.200Q6 8 6.500 11H3.300Q2.500 6.500 6.800 4.300z" fill="#2a62b4" />
              </svg>
            </div>
            <p className="mt-[3px] text-center font-['Open_Sans','Noto_Sans_CJK_SC',sans-serif] text-xs leading-[17px] whitespace-nowrap text-white [text-shadow:1px_1px_2px_#000,0_0_2px_#000]">
              {item.lines.map((l) => (
                <span key={l} className="block">
                  {l}
                </span>
              ))}
            </p>
          </li>
        ))}
      </ul>
    </aside>
  );
}

export default function App() {
  return (
    <div className="flex h-screen overflow-hidden font-['Inter','Noto_Sans_CJK_SC',sans-serif] text-xs leading-4 text-[#c4c4c4]">
      <main className="relative flex min-w-0 flex-1 flex-col">
        <TitleBar />
        <Toolbar />
        <div className="flex min-h-0 flex-1 gap-[2px] bg-[#191919]">
          <SceneSliver />
          <Hierarchy />
          <Project />
          <Inspector />
        </div>
        <FloatingWindow />
      </main>
      <Desktop />
    </div>
  );
}
